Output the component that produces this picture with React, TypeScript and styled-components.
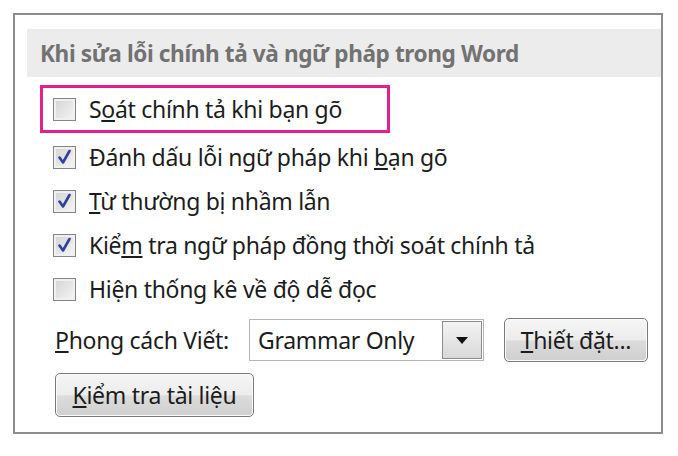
import styled, { createGlobalStyle } from 'styled-components';

const GlobalStyle = createGlobalStyle`
  body {
    margin: 0;
    background: #ffffff;
    font-family: 'Noto Sans', 'Open Sans', sans-serif;
  }
`;

type Option = {
  before: string;
  key?: string;
  after: string;
  checked: boolean;
  highlighted?: boolean;
};

const options: Option[] = [
  { before: 'S', key: 'o', after: 'át chính tả khi bạn gõ', checked: false, highlighted: true },
  { before: 'Đánh dấu lỗi ngữ pháp khi ', key: 'b', after: 'ạn gõ', checked: true },
  { before: '', key: 'T', after: 'ừ thường bị nhầm lẫn', checked: true },
  { before: 'Kiể', key: 'm', after: ' tra ngữ pháp đồng thời soát chính tả', checked: true },
  { before: 'Hiện thống kê về độ dễ đọc', after: '', checked: false },
];

const CheckBox = ({ checked }: { checked: boolean }) => (
  <Box>
    {checked && (
      <svg width="15" height="16" viewBox="0 0 15 16">
        <path d="M2.5 8.5 L6 13.5 L12.5 2" fill="none" stroke="#2f4199" strokeWidth="2.6" strokeLinecap="round" strokeLinejoin="round" />
      </svg>
    )}
  </Box>
);

export default function App() {
  return (
    <>
      <GlobalStyle />
      <Frame>
        <Heading>Khi sửa lỗi chính tả và ngữ pháp trong Word</Heading>
        <List>
          {options.map((o, i) => (
            <Row key={i} highlighted={!!o.highlighted}>
              <CheckBox checked={o.checked} />
              <Label>
                {o.before}
                {o.key && <u>{o.key}</u>}
                {o.after}
              </Label>
            </Row>
          ))}
        </List>
        <StyleRow>
          <Label>
            <u>P</u>hong cách Viết:
          </Label>
          <Select>
            <SelectValue>Grammar Only</SelectValue>
            <DropButton>
              <svg width="14" height="9" viewBox="0 0 14 9">
                <path d="M1 1 L13 1 L7 8 Z" fill="#111" />
              </svg>
            </DropButton>
          </Select>
          <Button width={144}>
            <u>T</u>hiết đặt...
          </Button>
        </StyleRow>
        <ButtonRow>
          <Button width={199}>
            <u>K</u>iểm tra tài liệu
          </Button>
        </ButtonRow>
      </Frame>
    </>
  );
}

const Frame = styled.div`
  margin: 13px 0 0 13px;
  width: 650px;
  height: 421px;
  box-sizing: border-box;
  border: 2px solid #8c8c8c;
  display: flex;
  flex-direction: column;
`;

const Heading = styled.div`
  margin: 14px 0 0 12px;
  height: 48px;
  background: #ececec;
  display: flex;
  align-items: center;
  padding-left: 13px;
  font-size: 22.6px;
  font-weight: 700;
  color: #727272;
  letter-spacing: -0.4px;
`;

const List = styled.div`
  display: flex;
  flex-direction: column;
  margin-top: 8px;
`;

const Row = styled.div<{ highlighted: boolean }>`
  display: flex;
  align-items: center;
  gap: 13px;
  box-sizing: border-box;
  margin-left: 25px;
  height: ${({ highlighted }) => (highlighted ? '48px' : '44px')};
  width: ${({ highlighted }) => (highlighted ? '350px' : 'auto')};
  padding-left: ${({ highlighted }) => (highlighted ? '10px' : '13px')};
  border: ${({ highlighted }) => (highlighted ? '3px solid #e1218c' : 'none')};
  margin-bottom: ${({ highlighted }) => (highlighted ? '2px' : '0')};
`;

const Box = styled.div`
  width: 21px;
  height: 21px;
  flex: none;
  border: 1px solid #858585;
  background: linear-gradient(135deg, #d2d2d2, #f6f6f6);
  box-shadow: inset 0 0 0 2px #f0f0f0;
  display: flex;
  align-items: center;
  justify-content: center;
`;

const Label = styled.span`
  font-size: 23px;
  color: #1c1c1c;
  white-space: nowrap;
  letter-spacing: -0.3px;
`;

const StyleRow = styled.div`
  display: flex;
  align-items: center;
  margin: 7px 0 0 40px;
  height: 44px;
  gap: 20px;
`;

const Select = styled.div`
  display: flex;
  align-items: stretch;
  width: 235px;
  height: 42px;
  box-sizing: border-box;
  border: 1px solid #b5b5b5;
  background: #fff;
`;

const SelectValue = styled.div`
  flex: 1;
  display: flex;
  align-items: center;
  padding-left: 8px;
  font-size: 23px;
  color: #1c1c1c;
  letter-spacing: -0.3px;
`;

const DropButton = styled.div`
  width: 38px;
  margin: 1px;
  border: 1px solid #8c8c8c;
  background: linear-gradient(#f4f4f4, #d8d8d8);
  display: flex;
  align-items: center;
  justify-content: center;
`;

const Button = styled.div<{ width: number }>`
  width: ${({ width }) => width}px;
  height: 44px;
  box-sizing: border-box;
  border: 1px solid #7a7a7a;
  border-radius: 5px;
  background: linear-gradient(#f6f6f6 0%, #ececec 50%, #dcdcdc 52%, #cfcfcf 100%);
  box-shadow: inset 0 0 0 1px #fbfbfb;
  display: flex;
  align-items: center;
  justify-content: center;
  font-size: 23px;
  color: #1c1c1c;
  letter-spacing: -0.3px;
`;

const ButtonRow = styled.div`
  display: flex;
  margin: 11px 0 0 40px;
`;
